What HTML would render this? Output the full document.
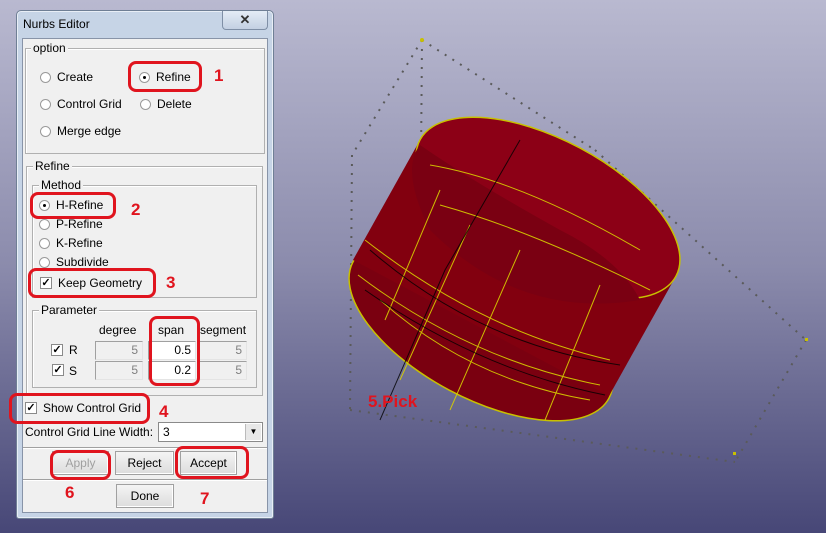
<!DOCTYPE html><html><head><meta charset="utf-8"><style>
*{margin:0;padding:0;box-sizing:border-box}
body{width:826px;height:533px;overflow:hidden;position:relative;background:linear-gradient(#b9b9d0,#8b8bac 50%,#474777);font-family:"Liberation Sans",sans-serif;font-size:12px;color:#000}
.a{position:absolute}
.t{position:absolute;white-space:nowrap;line-height:14px}
.gb{position:absolute;border:1px solid #b0b0b0;box-shadow:1px 1px 0 #fff inset}
.gl{position:absolute;background:#f0f0f0;padding:0 2px;line-height:13px}
.rd{position:absolute;width:11px;height:11px;border-radius:50%;background:#fff;border:1px solid #9a9a9a}
.rd.on::after{content:"";position:absolute;left:3px;top:3px;width:3px;height:3px;border-radius:50%;background:#000}
.cb{position:absolute;width:12px;height:12px;background:#fff;border:1px solid #8a8a8a;font-size:11px;line-height:10px;text-align:center;font-weight:bold}
.in{position:absolute;height:19px;border:1px solid #a0a0a0;border-right-color:#e4e4e4;border-bottom-color:#e4e4e4;text-align:right;padding-right:4px;line-height:17px;color:#808080;background:#f0f0f0}
.in.w{background:#fff;color:#000}
.bt{position:absolute;height:24px;border:1px solid #a0a0a0;background:linear-gradient(#f4f4f4,#dcdcdc);text-align:center;line-height:22px;box-shadow:-1px -1px 0 #fff inset}
.an{position:absolute;border:3px solid #e0141e;border-radius:8px}
.n{position:absolute;color:#e0141e;font-weight:bold;font-size:17px;line-height:18px}
</style></head><body>
<svg class="a" style="left:0;top:0" width="826" height="533">
<g stroke="#5a5a5a" stroke-width="2" stroke-dasharray="2 7" fill="none">
<path d="M422 40 L352 155 M422 40 L595 150 M352 155 L350 410 M806 340 L735 462 M595 150 L806 340 M350 410 L735 462 M422 40 L420 280"/>
</g>
<g>
<ellipse cx="481" cy="330" rx="145" ry="68" transform="rotate(28 481 330)" fill="#7a0010" stroke="#c8c000" stroke-width="1.5"/>
<polygon points="420,140 676,276 609,396 353,260" fill="#82000f"/>
<ellipse cx="548" cy="208" rx="145" ry="68" transform="rotate(28 548 208)" fill="#8c0016" stroke="#c8c000" stroke-width="1.5"/>
<path d="M420 145 Q400 170 430 230 Q520 320 640 300 Q620 260 560 230 Q470 180 420 145Z" fill="#7a0012"/>
<g stroke="#d8d000" stroke-width="1" fill="none" opacity=".9">
<path d="M365 240 Q480 330 610 360 M358 275 Q470 360 600 385 M380 300 Q470 380 590 400"/>
<path d="M470 225 L400 380 M520 250 L450 410 M600 285 L545 420 M440 190 L385 320"/>
<path d="M430 165 Q520 180 640 250 M440 205 Q530 230 650 290"/>
</g>
<g stroke="#000" stroke-width="1" fill="none" opacity=".8">
<path d="M370 250 Q480 345 620 365 M365 290 Q480 370 605 395 M520 140 L445 270 L380 420"/>
</g>
</g>
<circle cx="422" cy="40" r="2" fill="#c8c000"/><rect x="733" y="452" width="3" height="3" fill="#c8c000"/><rect x="805" y="338" width="3" height="3" fill="#c8c000"/>
</svg>
<div class="t" style="left:368px;top:393px;color:#e0141e;font-weight:bold;font-size:17px;line-height:18px">5.Pick</div>

<div class="a" style="left:16px;top:10px;width:258px;height:509px;background:#c6d4e6;border:1px solid #6f7f95;border-radius:5px 5px 3px 3px;box-shadow:inset 0 0 0 1px #e8eef6"></div>
<div class="t" style="left:23px;top:17px">Nurbs Editor</div>
<div class="a" style="left:222px;top:11px;width:46px;height:19px;border:1px solid #7f8fa6;border-top:none;border-radius:0 0 4px 4px;background:linear-gradient(#e4ecf6,#c3d0e2);text-align:center;font-weight:bold;font-size:13px;line-height:17px;color:#333">✕</div>
<div class="a" style="left:22px;top:38px;width:246px;height:475px;background:#f0f0f0;border:1px solid #8894a8"></div>

<div class="gb" style="left:25px;top:48px;width:240px;height:106px"></div>
<div class="gl" style="left:31px;top:42px">option</div>
<div class="rd" style="left:40px;top:72px"></div><div class="t" style="left:57px;top:70px">Create</div>
<div class="rd on" style="left:139px;top:72px"></div><div class="t" style="left:156px;top:70px">Refine</div>
<div class="rd" style="left:40px;top:99px"></div><div class="t" style="left:57px;top:97px">Control Grid</div>
<div class="rd" style="left:140px;top:99px"></div><div class="t" style="left:157px;top:97px">Delete</div>
<div class="rd" style="left:40px;top:126px"></div><div class="t" style="left:57px;top:124px">Merge edge</div>

<div class="gb" style="left:26px;top:166px;width:237px;height:230px"></div>
<div class="gl" style="left:33px;top:160px">Refine</div>
<div class="gb" style="left:32px;top:185px;width:225px;height:113px"></div>
<div class="gl" style="left:39px;top:179px">Method</div>
<div class="rd on" style="left:39px;top:200px"></div><div class="t" style="left:56px;top:198px">H-Refine</div>
<div class="rd" style="left:39px;top:219px"></div><div class="t" style="left:56px;top:217px">P-Refine</div>
<div class="rd" style="left:39px;top:238px"></div><div class="t" style="left:56px;top:236px">K-Refine</div>
<div class="rd" style="left:39px;top:257px"></div><div class="t" style="left:56px;top:255px">Subdivide</div>
<div class="cb" style="left:40px;top:277px">✓</div><div class="t" style="left:58px;top:276px">Keep Geometry</div>

<div class="gb" style="left:32px;top:310px;width:225px;height:78px"></div>
<div class="gl" style="left:39px;top:304px">Parameter</div>
<div class="t" style="left:99px;top:323px">degree</div><div class="t" style="left:158px;top:323px">span</div><div class="t" style="left:200px;top:323px">segment</div>
<div class="cb" style="left:51px;top:344px">✓</div><div class="t" style="left:69px;top:343px">R</div>
<div class="cb" style="left:52px;top:364px">✓</div><div class="t" style="left:69px;top:364px">S</div>
<div class="in" style="left:95px;top:341px;width:48px">5</div><div class="in w" style="left:148px;top:341px;width:48px">0.5</div><div class="in" style="left:199px;top:341px;width:48px">5</div>
<div class="in" style="left:95px;top:361px;width:48px">5</div><div class="in w" style="left:148px;top:361px;width:48px">0.2</div><div class="in" style="left:199px;top:361px;width:48px">5</div>

<div class="cb" style="left:25px;top:402px">✓</div><div class="t" style="left:43px;top:401px">Show Control Grid</div>
<div class="t" style="left:25px;top:425px">Control Grid Line Width:</div>
<div class="a" style="left:158px;top:422px;width:105px;height:20px;background:#fff;border:1px solid #8a8a8a"><span style="position:absolute;left:4px;top:2px">3</span><div style="position:absolute;right:1px;top:1px;width:16px;height:16px;background:#e8e8e8;border-left:1px solid #bbb;font-size:8px;text-align:center;line-height:16px">▼</div></div>
<div class="a" style="left:23px;top:447px;width:244px;border-top:1px solid #a0a0a0;border-bottom:1px solid #fff"></div>
<div class="bt" style="left:52px;top:451px;width:57px;color:#a0a0a0">Apply</div>
<div class="bt" style="left:115px;top:451px;width:59px">Reject</div>
<div class="bt" style="left:180px;top:451px;width:57px">Accept</div>
<div class="a" style="left:23px;top:479px;width:244px;border-top:1px solid #a0a0a0;border-bottom:1px solid #fff"></div>
<div class="bt" style="left:116px;top:484px;width:58px">Done</div>

<div class="an" style="left:128px;top:61px;width:74px;height:31px"></div><div class="n" style="left:214px;top:67px">1</div>
<div class="an" style="left:30px;top:192px;width:86px;height:27px"></div><div class="n" style="left:131px;top:201px">2</div>
<div class="an" style="left:28px;top:268px;width:128px;height:30px"></div><div class="n" style="left:166px;top:274px">3</div>
<div class="an" style="left:149px;top:316px;width:51px;height:70px"></div>
<div class="an" style="left:9px;top:393px;width:141px;height:31px"></div><div class="n" style="left:159px;top:403px">4</div>
<div class="an" style="left:50px;top:450px;width:61px;height:30px"></div><div class="n" style="left:65px;top:484px">6</div>
<div class="an" style="left:175px;top:446px;width:74px;height:33px"></div><div class="n" style="left:200px;top:490px">7</div>
</body></html>
